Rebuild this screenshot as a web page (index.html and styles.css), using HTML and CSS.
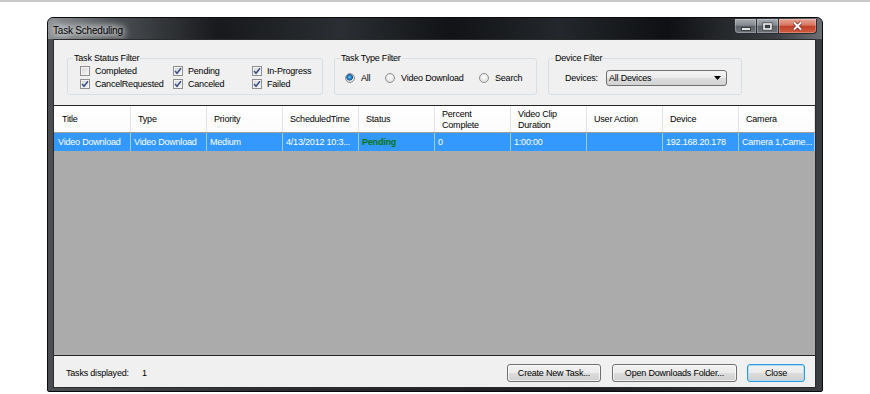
FILE: index.html
```html
<!DOCTYPE html>
<html lang="en">
<head>
  <meta charset="UTF-8" />
  <meta name="viewport" content="width=device-width, initial-scale=1.0" />
  <title>Task Scheduling</title>
  <link rel="stylesheet" href="styles.css">
</head>
<body>
  <div class="topline"></div>

  <div class="window">
    <div class="titlebar">
      <span class="title">Task Scheduling</span>
      <div class="caption">
        <span class="cap-btn cap-min">
          <svg width="10" height="4" viewBox="0 0 10 4"><rect x="0.5" y="0.5" width="9" height="3" fill="#e6e6e6" stroke="#3a3d42" stroke-width="1"/></svg>
        </span>
        <span class="cap-btn cap-max">
          <svg width="11" height="9" viewBox="0 0 11 9"><rect x="0.5" y="0.5" width="10" height="8" fill="#3a3d42"/><rect x="2" y="2" width="7" height="5" fill="none" stroke="#f2f2f2" stroke-width="1.6"/></svg>
        </span>
        <span class="cap-btn cap-close">
          <svg width="11" height="10" viewBox="0 0 11 10"><path d="M2 1.5 L9 8.5 M9 1.5 L2 8.5" stroke="#6b1c10" stroke-width="3.2"/><path d="M2 1.5 L9 8.5 M9 1.5 L2 8.5" stroke="#fff" stroke-width="2"/></svg>
        </span>
      </div>
    </div>

    <div class="client">
      <div class="filters">
        <fieldset class="group group-status">
          <legend>Task Status Filter</legend>
          <div class="checks">
            <label class="check"><span class="cb"></span>Completed</label>
            <label class="check"><span class="cb on"><svg width="8" height="8" viewBox="0 0 8 8"><path d="M1 4 L3 6.3 L7 1.3" fill="none" stroke="#3d4f88" stroke-width="1.5"/></svg></span>Pending</label>
            <label class="check"><span class="cb on"><svg width="8" height="8" viewBox="0 0 8 8"><path d="M1 4 L3 6.3 L7 1.3" fill="none" stroke="#3d4f88" stroke-width="1.5"/></svg></span>In-Progress</label>
            <label class="check"><span class="cb on"><svg width="8" height="8" viewBox="0 0 8 8"><path d="M1 4 L3 6.3 L7 1.3" fill="none" stroke="#3d4f88" stroke-width="1.5"/></svg></span>CancelRequested</label>
            <label class="check"><span class="cb on"><svg width="8" height="8" viewBox="0 0 8 8"><path d="M1 4 L3 6.3 L7 1.3" fill="none" stroke="#3d4f88" stroke-width="1.5"/></svg></span>Canceled</label>
            <label class="check"><span class="cb on"><svg width="8" height="8" viewBox="0 0 8 8"><path d="M1 4 L3 6.3 L7 1.3" fill="none" stroke="#3d4f88" stroke-width="1.5"/></svg></span>Failed</label>
          </div>
        </fieldset>

        <fieldset class="group group-type">
          <legend>Task Type Filter</legend>
          <div class="radios">
            <label class="radio"><span class="rb on"></span>All</label>
            <label class="radio"><span class="rb"></span>Video Download</label>
            <label class="radio"><span class="rb"></span>Search</label>
          </div>
        </fieldset>

        <fieldset class="group group-device">
          <legend>Device Filter</legend>
          <div class="device-row">
            <span class="device-label">Devices:</span>
            <div class="combo">
              <span>All Devices</span>
              <svg width="7" height="4" viewBox="0 0 7 4"><path d="M0 0 H7 L3.5 4 Z" fill="#000"/></svg>
            </div>
          </div>
        </fieldset>
      </div>

      <div class="grid">
        <div class="grid-head">
          <div>Title</div>
          <div>Type</div>
          <div>Priority</div>
          <div>ScheduledTime</div>
          <div>Status</div>
          <div>Percent<br>Complete</div>
          <div>Video Clip<br>Duration</div>
          <div>User Action</div>
          <div>Device</div>
          <div>Camera</div>
        </div>
        <div class="grid-row selected">
          <div>Video Download</div>
          <div>Video Download</div>
          <div>Medium</div>
          <div>4/13/2012 10:3...</div>
          <div class="status-pending">Pending</div>
          <div>0</div>
          <div>1:00:00</div>
          <div></div>
          <div>192.168.20.178</div>
          <div>Camera 1,Came...</div>
        </div>
      </div>

      <div class="footer">
        <span class="count-label">Tasks displayed:</span>
        <span class="count">1</span>
        <div class="buttons">
          <button class="btn btn-create">Create New Task...</button>
          <button class="btn btn-open">Open Downloads Folder...</button>
          <button class="btn btn-close">Close</button>
        </div>
      </div>
    </div>
  </div>
</body>
</html>
```

FILE: styles.css
```css
body {
  margin: 0;
  background: #fff;
  font-family: "Liberation Sans", Arial, sans-serif;
  font-size: 9px;
  letter-spacing: -0.2px;
  color: #000;
}
.topline {
  height: 2px;
  background: #c9c9c9;
}

/* window frame */
.window {
  box-sizing: border-box;
  width: 776px;
  height: 375px;
  margin: 15px 0 0 47px;
  padding: 0 6px 3px 5px;
  border: 1px solid #0b0b0b;
  border-radius: 6px 6px 2px 2px;
  background: linear-gradient(to right, #4a4d51, #2a2c30 30%, #1c1e21 70%, #3a3d41);
  display: flex;
  flex-direction: column;
}
.titlebar {
  height: 21px;
  margin: 0 -6px 0 -5px;
  padding: 0 5px;
  display: flex;
  border-radius: 5px 5px 0 0;
  background: linear-gradient(to right, #8e9194 0, #4b4e52 9%, #17191c 22%, #2b2e32 38%, #111316 52%, #24272b 66%, #0e1013 80%, #3b3e42 94%, #6c6f73 100%);
}
.title {
  padding-top: 3px;
  align-self: center;
  font-size: 10px;
  color: #000;
  text-shadow: 0 0 6px #fff, 0 0 8px #fff, 0 0 10px rgba(255,255,255,0.9);
}
.caption {
  margin-left: auto;
  margin-top: 1px;
  display: flex;
  height: 15px;
}
.cap-btn {
  box-sizing: border-box;
  height: 15px;
  display: flex;
  align-items: center;
  justify-content: center;
  border: 1px solid #2a2d31;
  border-top: none;
  box-shadow: inset 0 0 0 1px rgba(255,255,255,0.25);
}
.cap-min {
  width: 23px;
  border-radius: 0 0 0 4px;
  background: linear-gradient(#a7abb0, #858a90 45%, #5d6269 50%, #70757c);
}
.cap-min svg {
  margin-top: 5px;
}
.cap-max {
  width: 22px;
  border-left: none;
  background: linear-gradient(#a7abb0, #858a90 45%, #5d6269 50%, #70757c);
}
.cap-close {
  width: 38px;
  border-left: none;
  border-radius: 0 0 4px 0;
  background: linear-gradient(#e7a595, #d6765f 45%, #c1402a 50%, #cf5c40);
}

/* client area */
.client {
  flex: 1;
  display: flex;
  flex-direction: column;
  border: 1px solid #2b2b2b;
  background: #f0f0f0;
}
.filters {
  box-sizing: border-box;
  height: 65px;
  padding: 13px 0 0 13px;
  display: flex;
  gap: 11px;
}
.group {
  box-sizing: border-box;
  height: 42px;
  margin: 0;
  padding: 0;
  min-width: 0;
  border: 1px solid #d5dfe5;
  border-radius: 3px;
}
.group legend {
  margin-left: 5px;
  padding: 0 1px;
  line-height: 10px;
}
.group-status { width: 256px; }
.group-type { width: 203px; }
.group-device { width: 194px; }

.checks {
  display: grid;
  grid-template-columns: 93px 79px auto;
  grid-auto-rows: 13px;
  padding: 1px 0 0 12px;
}
.check, .radio {
  display: flex;
  align-items: center;
  gap: 5px;
}
.cb {
  box-sizing: border-box;
  width: 10px;
  height: 10px;
  display: flex;
  align-items: center;
  justify-content: center;
  border: 1px solid #8e8f8f;
  background: linear-gradient(135deg, #d4d4d4, #f6f6f6);
  box-shadow: inset 0 0 0 1px #f4f4f4;
}
.radios {
  display: grid;
  grid-template-columns: 40px 94px auto;
  grid-auto-rows: 13px;
  padding: 8px 0 0 10px;
}
.radio {
  gap: 6px;
}
.rb {
  box-sizing: border-box;
  width: 10px;
  height: 10px;
  border: 1px solid #8e8f8f;
  border-radius: 50%;
  background: radial-gradient(circle at 50% 40%, #fff, #d4d4d4);
}
.rb.on {
  background: radial-gradient(circle at 45% 40%, #7fd3f7 0, #2a8bd0 1.5px, #1a5a98 3px, #d8d8d8 3.6px, #eee);
}
.device-row {
  display: flex;
  align-items: center;
  padding: 7px 0 0 16px;
}
.device-label {
  width: 41px;
}
.combo {
  box-sizing: border-box;
  width: 121px;
  height: 16px;
  padding: 0 5px 0 2px;
  display: flex;
  align-items: center;
  justify-content: space-between;
  border: 1px solid #707070;
  border-radius: 3px;
  background: linear-gradient(#f4f4f4, #ebebeb 50%, #dedede 50%, #d2d2d2);
}

/* data grid */
.grid {
  box-sizing: border-box;
  height: 251px;
  display: flex;
  flex-direction: column;
  border-top: 1px solid #262626;
  border-bottom: 1px solid #262626;
  background: #ababab;
}
.grid-head, .grid-row {
  display: grid;
  grid-template-columns: 77px repeat(9, 76px);
}
.grid-head {
  box-sizing: border-box;
  height: 27px;
  background: linear-gradient(#fff, #fbfbfb);
  border-bottom: 1px solid #a0a0a0;
}
.grid-head > div {
  display: flex;
  align-items: center;
  padding: 1px 0 0 7px;
  line-height: 11px;
  border-right: 1px solid #e2e2e2;
}
.grid-head > div:first-child {
  padding-left: 8px;
}
.grid-row {
  height: 18px;
}
.grid-row > div {
  display: flex;
  align-items: center;
  padding-left: 3px;
  white-space: nowrap;
  overflow: hidden;
  border-right: 1px solid #9cc8f2;
}
.grid-row > div:first-child {
  padding-left: 4px;
}
.grid-row.selected {
  background: #3399ff;
  color: #fff;
}
.status-pending {
  color: #0b750b;
  font-weight: bold;
}

/* footer */
.footer {
  flex: 1;
  display: flex;
  align-items: center;
  padding: 2px 10px 0 12px;
}
.count-label {
  width: 76px;
}
.buttons {
  margin-left: auto;
  display: flex;
  gap: 10px;
}
.btn {
  box-sizing: border-box;
  height: 18px;
  padding: 0;
  font-family: inherit;
  font-size: 9px;
  letter-spacing: -0.2px;
  color: #000;
  border: 1px solid #707070;
  border-radius: 3px;
  background: linear-gradient(#f2f2f2, #ebebeb 50%, #dddddd 50%, #cfcfcf);
  box-shadow: inset 0 0 0 1px rgba(255,255,255,0.7);
}
.btn-create { width: 94px; margin-right: 1px; }
.btn-open { width: 125px; }
.btn-close {
  width: 58px;
  border-color: #3296d8;
  box-shadow: inset 0 0 0 1px #a8e2fa;
}
```
